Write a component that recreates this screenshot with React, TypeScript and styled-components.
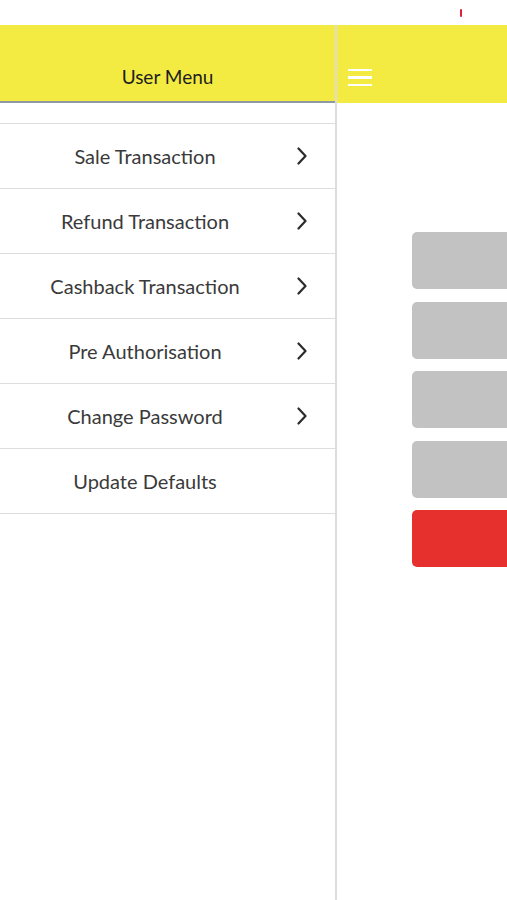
import React from 'react';
import styled, { createGlobalStyle } from 'styled-components';

const GlobalStyle = createGlobalStyle`
  html, body {
    margin: 0;
    padding: 0;
    background: #ffffff;
    font-family: Lato, "Open Sans", sans-serif;
  }
`;

const menuItems = [
  { label: 'Sale Transaction', arrow: true },
  { label: 'Refund Transaction', arrow: true },
  { label: 'Cashback Transaction', arrow: true },
  { label: 'Pre Authorisation', arrow: true },
  { label: 'Change Password', arrow: true },
  { label: 'Update Defaults', arrow: false },
];

const actionButtons = ['grey', 'grey', 'grey', 'grey', 'red'] as const;

const Chevron: React.FC = () => (
  <svg width="12" height="18" viewBox="0 0 12 18">
    <path d="M2.5 1.5 L9.5 9 L2.5 16.5" fill="none" stroke="#2b2b2b" strokeWidth="2.2" strokeLinecap="round" strokeLinejoin="round" />
  </svg>
);

const App: React.FC = () => {
  return (
    <S.Page>
      <GlobalStyle />
      <S.StatusBar>
        <S.Tick />
      </S.StatusBar>
      <S.Main>
        <S.Drawer>
          <S.DrawerHeader>User Menu</S.DrawerHeader>
          <S.List>
            {menuItems.map((item) => (
              <S.Row key={item.label}>
                <S.Label>{item.label}</S.Label>
                <S.Arrow>{item.arrow && <Chevron />}</S.Arrow>
              </S.Row>
            ))}
          </S.List>
        </S.Drawer>
        <S.Screen>
          <S.ScreenHeader>
            <S.Burger>
              <span />
              <span />
              <span />
            </S.Burger>
          </S.ScreenHeader>
          <S.Buttons>
            {actionButtons.map((tone, i) => (
              <S.ActionButton key={i} tone={tone} />
            ))}
          </S.Buttons>
        </S.Screen>
      </S.Main>
    </S.Page>
  );
};

const S = {
  Page: styled.div`
    display: flex;
    flex-direction: column;
    width: 507px;
    height: 900px;
    overflow: hidden;
  `,
  StatusBar: styled.div`
    position: relative;
    height: 25px;
    background: #ffffff;
  `,
  Tick: styled.div`
    position: absolute;
    left: 460px;
    top: 9px;
    width: 2px;
    height: 8px;
    border-radius: 1px;
    background: #e0203a;
  `,
  Main: styled.div`
    display: flex;
    flex: 1;
  `,
  Drawer: styled.div`
    display: flex;
    flex-direction: column;
    width: 335px;
    flex-shrink: 0;
    border-right: 2px solid #dcdcdc;
  `,
  DrawerHeader: styled.div`
    display: flex;
    align-items: flex-end;
    justify-content: center;
    box-sizing: border-box;
    height: 78px;
    padding-bottom: 13px;
    background: #f3eb42;
    border-bottom: 2px solid #8d9aa4;
    color: #1e1e1e;
    font-size: 19px;
  `,
  List: styled.div`
    display: flex;
    flex-direction: column;
    padding-top: 20px;
  `,
  Row: styled.div`
    display: flex;
    align-items: center;
    height: 64px;
    border-top: 1px solid #dedede;

    &:last-child {
      border-bottom: 1px solid #dedede;
    }
  `,
  Label: styled.div`
    flex: 1;
    text-align: center;
    padding-right: 6px;
    color: #3a3a3a;
    font-size: 20px;
  `,
  Arrow: styled.div`
    display: flex;
    width: 12px;
    margin-right: 27px;
  `,
  Screen: styled.div`
    display: flex;
    flex-direction: column;
    flex: 1;
    min-width: 0;
  `,
  ScreenHeader: styled.div`
    display: flex;
    align-items: flex-end;
    box-sizing: border-box;
    height: 78px;
    padding: 0 0 17px 11px;
    background: #f3eb42;
  `,
  Burger: styled.div`
    display: flex;
    flex-direction: column;
    gap: 5px;
    width: 24px;

    span {
      display: block;
      height: 2.5px;
      background: #ffffff;
    }
  `,
  Buttons: styled.div`
    display: flex;
    flex-direction: column;
    gap: 12.5px;
    padding: 129px 0 0 75px;
  `,
  ActionButton: styled.div<{ tone: 'grey' | 'red' }>`
    width: 140px;
    height: 57px;
    border-radius: 5px;
    background: ${(p) => (p.tone === 'red' ? '#e6302e' : '#c2c2c2')};
  `,
};

export default App;
